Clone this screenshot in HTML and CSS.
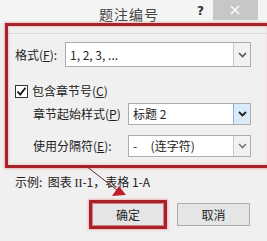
FILE: index.html
```html
<!DOCTYPE html>
<html lang="zh-CN">
<head>
    <meta charset="UTF-8">
    <meta name="viewport" content="width=device-width, initial-scale=1.0">
    <title>题注编号</title>
    <link rel="stylesheet" href="styles.css">
</head>
<body>
    <div class="dialog">
        <div class="titlebar">
            <span class="title">题注编号</span>
            <span class="help">?</span>
            <span class="close">
                <svg width="10" height="10" viewBox="0 0 10 10"><path d="M1 1L9 9M9 1L1 9" stroke="#fff" stroke-width="1.4"/></svg>
            </span>
        </div>

        <!-- red annotation frame around the options -->
        <div class="mark-box">
            <div class="row row-format">
                <label>格式(<u>F</u>):</label>
                <div class="select wide">
                    <span class="value">1, 2, 3, ...</span>
                    <span class="drop">
                        <svg width="9" height="6" viewBox="0 0 9 6"><path d="M1 1L4.5 4.5L8 1" fill="none" stroke="#555" stroke-width="1.6"/></svg>
                    </span>
                </div>
            </div>

            <div class="check-row">
                <span class="checkbox">
                    <svg width="11" height="11" viewBox="0 0 11 11"><path d="M1.5 5.5L4.2 8.5L9.5 1.8" fill="none" stroke="#111" stroke-width="1.8"/></svg>
                </span>
                <span>包含章节号(<u>C</u>)</span>
            </div>

            <div class="row indent">
                <label>章节起始样式(<u>P</u>)</label>
                <div class="select">
                    <span class="value">标题 2</span>
                    <span class="drop hot">
                        <svg width="9" height="6" viewBox="0 0 9 6"><path d="M1 1L4.5 4.5L8 1" fill="none" stroke="#222" stroke-width="1.8"/></svg>
                    </span>
                </div>
            </div>

            <div class="row indent row-last">
                <label>使用分隔符(<u>E</u>):</label>
                <div class="select">
                    <span class="value">-&nbsp;&nbsp;&nbsp;&nbsp;&nbsp;(连字符)</span>
                    <span class="drop">
                        <svg width="9" height="6" viewBox="0 0 9 6"><path d="M1 1L4.5 4.5L8 1" fill="none" stroke="#777" stroke-width="1.6"/></svg>
                    </span>
                </div>
            </div>
        </div>

        <div class="example">示例:&nbsp; 图表 <span class="roman">II</span>-1，表格 1-A</div>

        <div class="buttons">
            <div class="ok-mark"><button class="btn">确定</button></div>
            <button class="btn">取消</button>
        </div>

        <svg class="note-arrow" width="267" height="241" viewBox="0 0 267 241">
            <path d="M86 166L117 190" stroke="#6b2a2a" stroke-width="1"/>
            <path d="M112 196L126 195L119 186Z" fill="#c0202a"/>
        </svg>
    </div>
</body>
</html>
```

FILE: styles.css
```css
body {
    margin: 0;
    background: #f0f0f0;
    font-family: "Noto Sans CJK SC", "Microsoft YaHei", sans-serif;
    font-size: 12px;
    line-height: 16px;
    color: #222;
}

.dialog {
    position: relative;
    width: 267px;
    height: 241px;
    background: #f0f0f0;
    overflow: hidden;
}

.titlebar {
    height: 23px;
    display: flex;
    align-items: flex-start;
    background: #f4f4f4;
}

.title {
    margin-left: 99px;
    margin-top: 5px;
    font-size: 14px;
    line-height: 18px;
    color: #444;
    letter-spacing: 1px;
}

.help {
    margin-left: 38px;
    margin-top: 3px;
    font-family: "DejaVu Sans", sans-serif;
    font-weight: bold;
    font-size: 12px;
    color: #333;
}

.close {
    margin-left: 9px;
    width: 45px;
    height: 20px;
    background: #c7c7c7;
    display: flex;
    align-items: center;
    justify-content: center;
}

.mark-box {
    margin-left: 5px;
    width: 253px;
    border: 3px solid #a8222c;
    box-shadow: 0 0 2px 1px rgba(230, 120, 120, 0.45), inset 0 0 2px 1px rgba(230, 120, 120, 0.35);
    padding: 16px 0 8px 7px;
    background: linear-gradient(#f0f0f0 0, #f0f0f0 7px, #dcdcdc 7px, #dcdcdc 8px, #f0f0f0 8px);
}

.row {
    display: flex;
    align-items: center;
}

.row label {
    flex: none;
}

.row-format label {
    width: 50px;
}

.indent {
    margin-top: 10px;
    padding-left: 18px;
}

.indent label {
    width: 95px;
}

.select {
    display: flex;
    align-items: stretch;
    width: 121px;
    height: 20px;
    border: 1px solid #acacac;
    background: #fff;
}

.select.wide {
    width: 184px;
    height: 23px;
}

.value {
    flex: 1;
    display: flex;
    align-items: center;
    padding-left: 4px;
}

.drop {
    width: 16px;
    display: flex;
    align-items: center;
    justify-content: center;
    border-left: 1px solid #c8c8c8;
    background: #f2f2f2;
}

.drop.hot {
    background: #dbeaf8;
    border-left-color: #7eb4ea;
}

.check-row {
    margin-top: 16px;
    margin-bottom: 4px;
    height: 16px;
    display: flex;
    align-items: center;
    gap: 4px;
}

.check-row + .indent {
    margin-top: 0;
}

.checkbox {
    width: 11px;
    height: 11px;
    border: 1px solid #333;
    background: #fff;
    display: flex;
    align-items: center;
    justify-content: center;
}

.example {
    margin: 6px 0 0 15px;
}

.roman {
    font-family: "Liberation Serif", serif;
}

.buttons {
    margin-top: 9px;
    display: flex;
    align-items: center;
    padding-left: 89px;
    gap: 10px;
}

.ok-mark {
    border: 3px solid #a8222c;
    box-shadow: 0 0 2px 1px rgba(230, 120, 120, 0.45);
}

.btn {
    display: block;
    width: 73px;
    height: 23px;
    border: 1px solid #adadad;
    background: #e5e5e5;
    font-family: inherit;
    font-size: 12px;
    line-height: 16px;
    color: #222;
    padding: 0;
}

.ok-mark .btn {
    width: 72px;
    border-color: #d08080;
}

.note-arrow {
    position: absolute;
    left: 0;
    top: 0;
    pointer-events: none;
}
```
